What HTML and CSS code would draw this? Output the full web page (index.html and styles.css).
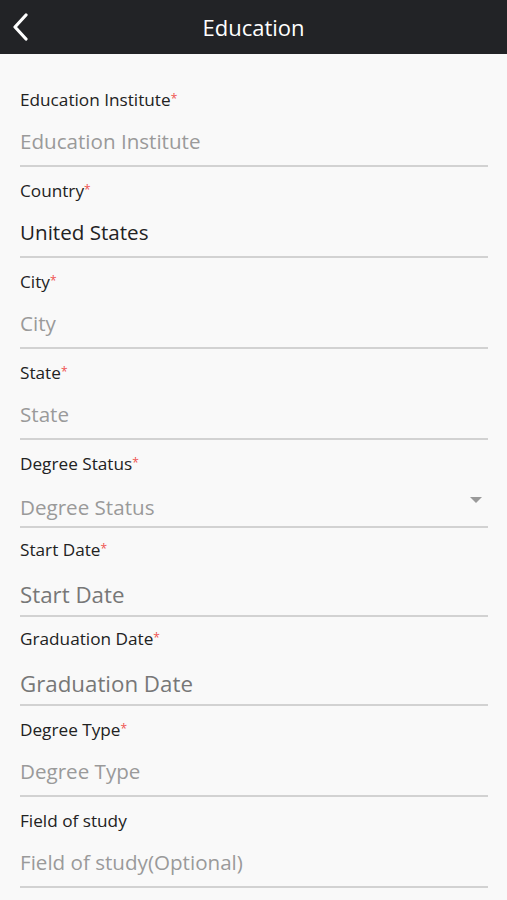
FILE: index.html
```html
<!DOCTYPE html>
<html>
  <head>
    <title>Education</title>
    <link rel="stylesheet" href="styles.css">
  </head>
  <body>
    <div class="topbar">
      <a class="back" href="#">
        <svg width="18" height="28" viewBox="0 0 18 28">
          <path d="M15 2 L4 14 L15 26" fill="none" stroke="#fff" stroke-width="3.2" stroke-linecap="round" stroke-linejoin="round" />
        </svg>
      </a>
      <h1>Education</h1>
    </div>

    <form class="form">
      <div class="field">
        <label>Education Institute<span class="req">*</span></label>
        <div class="input placeholder">Education Institute</div>
      </div>
      <div class="field">
        <label>Country<span class="req">*</span></label>
        <div class="input">United States</div>
      </div>
      <div class="field">
        <label>City<span class="req">*</span></label>
        <div class="input placeholder">City</div>
      </div>
      <div class="field">
        <label>State<span class="req">*</span></label>
        <div class="input placeholder">State</div>
      </div>
      <div class="field field-select">
        <label>Degree Status<span class="req">*</span></label>
        <div class="input placeholder">
          Degree Status
          <span class="caret"></span>
        </div>
      </div>
      <div class="field field-date">
        <label>Start Date<span class="req">*</span></label>
        <div class="input date">Start Date</div>
      </div>
      <div class="field field-date">
        <label>Graduation Date<span class="req">*</span></label>
        <div class="input date">Graduation Date</div>
      </div>
      <div class="field">
        <label>Degree Type<span class="req">*</span></label>
        <div class="input placeholder">Degree Type</div>
      </div>
      <div class="field">
        <label>Field of study</label>
        <div class="input placeholder">Field of study(Optional)</div>
      </div>
      <div class="field">
        <label>Student ID</label>
        <div class="input placeholder">Student ID</div>
      </div>
    </form>
  </body>
</html>
```

FILE: styles.css
```css
body {
  margin: 0;
  background-color: #f9f9f9;
  font-family: "Open Sans", sans-serif;
  color: #222;
}
.topbar {
  height: 54px;
  background-color: #222326;
  display: flex;
  align-items: center;
  justify-content: center;
  position: relative;
}
.topbar h1 {
  margin: 0;
  font-size: 22px;
  font-weight: 500;
  color: #fff;
}
.back {
  position: absolute;
  left: 11px;
  top: 13px;
  display: block;
}
.form {
  padding: 22px 19px 0 20px;
}
.field {
  padding: 14px 0 10px;
  border-bottom: 2px solid #d2d2d2;
}
.field label {
  display: block;
  font-size: 17.2px;
  line-height: 20px;
  color: #222;
}
.req {
  color: #ef5350;
  font-size: 12px;
  vertical-align: top;
  line-height: 14px;
  position: relative;
  top: 2px;
}
.input {
  margin-top: 17px;
  font-size: 20.6px;
  line-height: 28px;
  color: #222;
  position: relative;
}
.placeholder {
  color: #9a9a9a;
}
.field-select {
  padding-bottom: 5px;
}
.field-select .input {
  margin-top: 19px;
}
.caret {
  position: absolute;
  right: 6px;
  top: 4px;
  width: 0;
  height: 0;
  border-left: 6px solid transparent;
  border-right: 6px solid transparent;
  border-top: 6px solid #9a9a9a;
}
.field-date {
  padding-top: 12px;
  padding-bottom: 5px;
}
.field-date .input {
  margin-top: 20px;
  font-size: 22.3px;
  line-height: 30px;
  color: #777;
}
```
